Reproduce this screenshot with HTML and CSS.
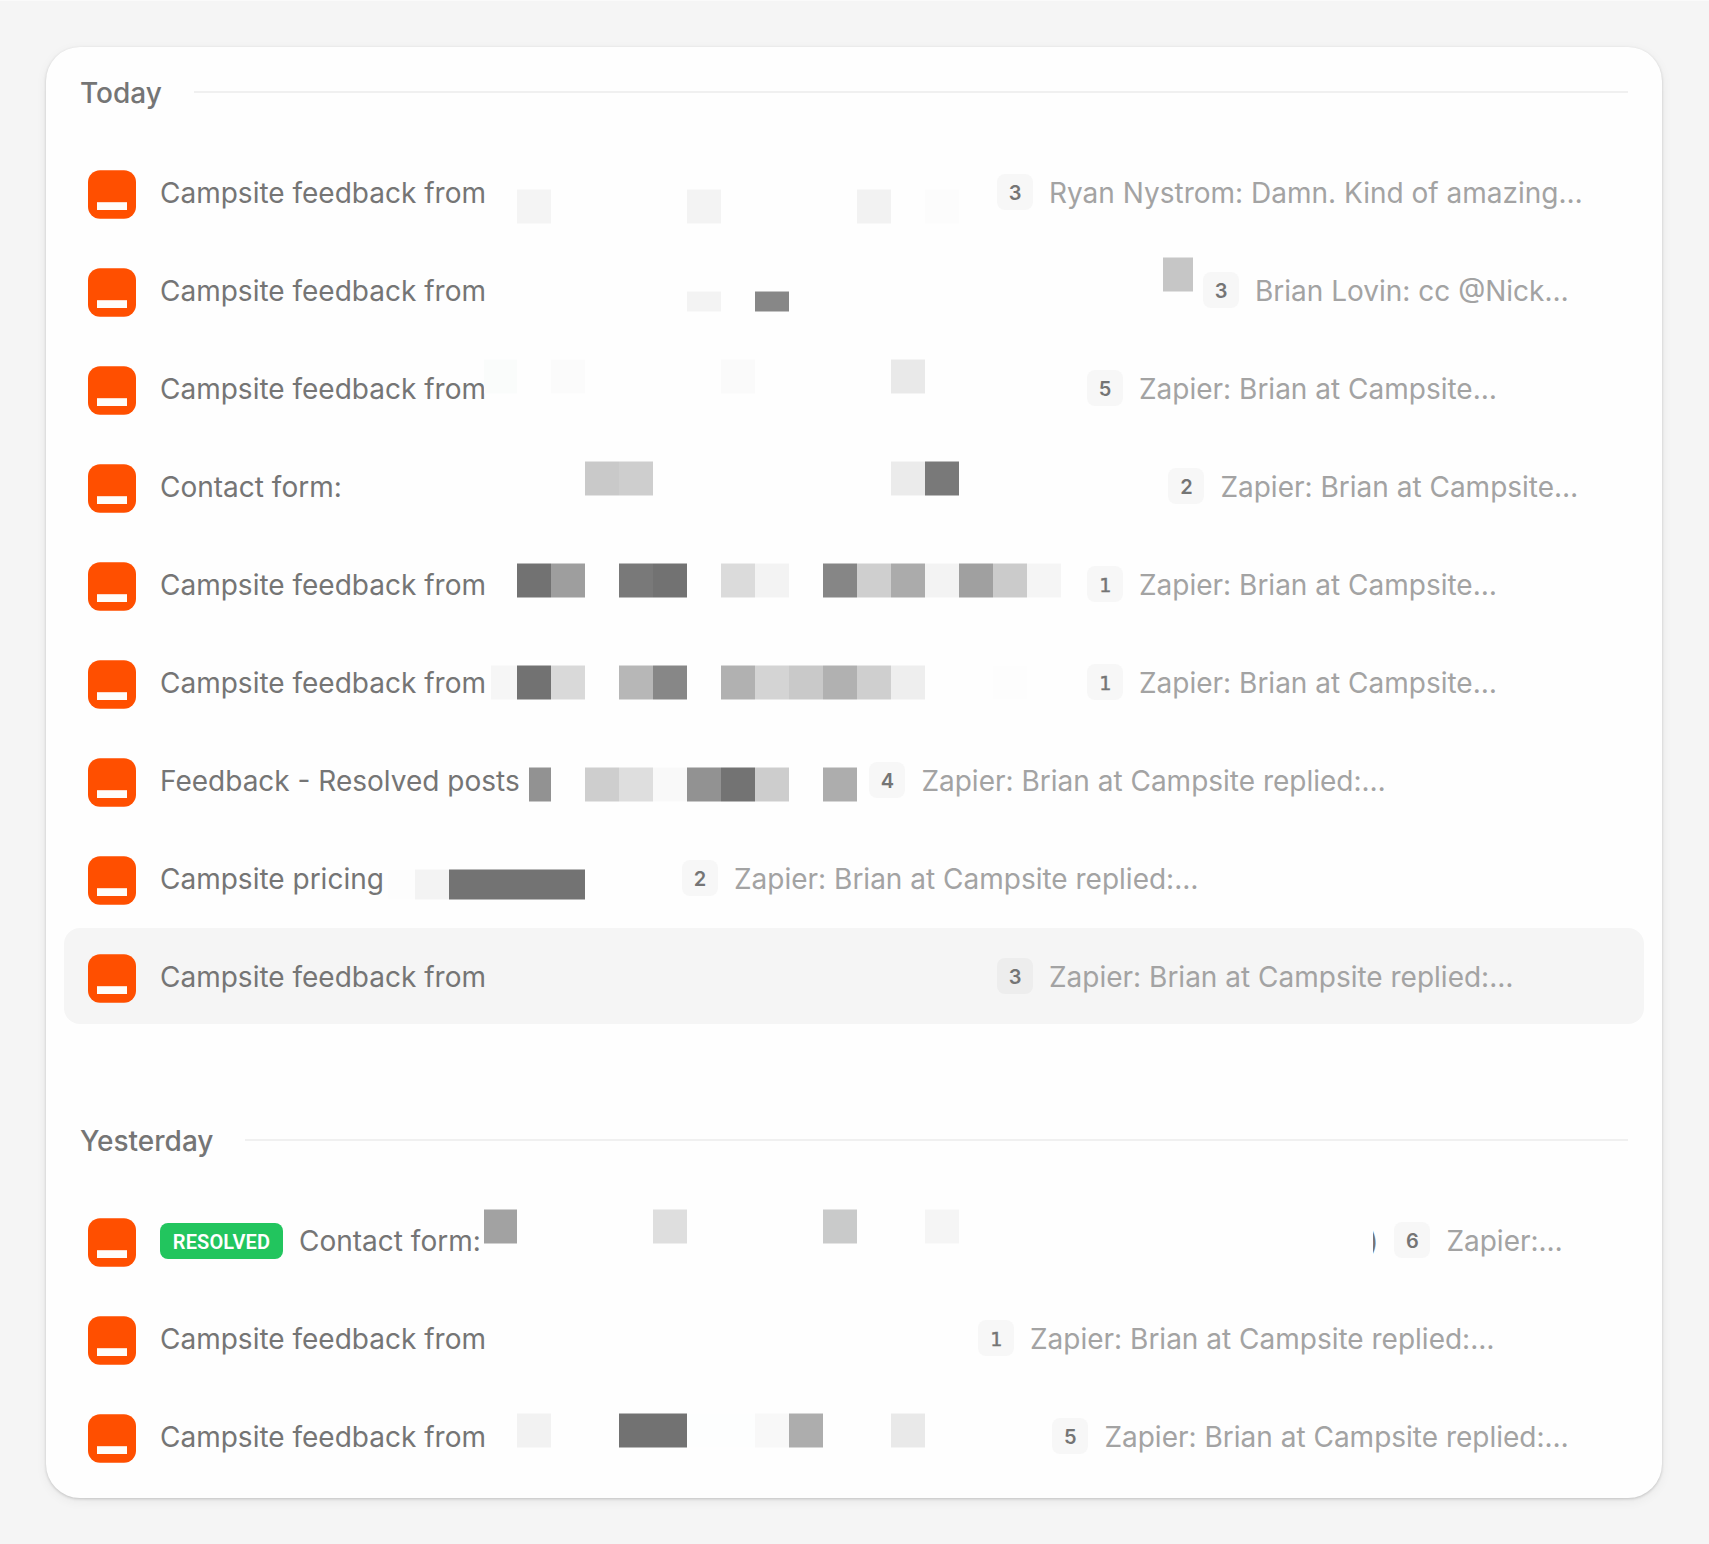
FILE: index.html
```html
<!DOCTYPE html>
<html lang="en">
<head>
<meta charset="utf-8">
<title>Posts</title>
<link rel="stylesheet" href="styles.css">
</head>
<body>
<main class="card">
  <section class="group">
    <h2 class="group-title"><span>Today</span></h2>
    <ul class="list">
      <li class="row">
        <svg class="avatar" viewBox="0 0 48 49"><rect y=".3" width="48" height="48.4" rx="12" fill="#ff4f00"/><rect x="9" y="32.2" width="30" height="7.8" fill="#fffdf9"/></svg>
        <div class="title" style="width:821px">Campsite feedback from</div>
        <span class="count">3</span>
        <span class="preview">Ryan Nystrom: Damn. Kind of amazing…</span>
        <svg class="redact" viewBox="0 0 1580 96"><rect x="453" y="45.5" width="34" height="34" fill="#f4f4f4"/><rect x="623" y="45.5" width="34" height="34" fill="#f3f3f3"/><rect x="793" y="45.5" width="34" height="34" fill="#f2f2f2"/><rect x="861" y="45.5" width="34" height="34" fill="#fcfcfc"/></svg>
      </li>
      <li class="row">
        <svg class="avatar" viewBox="0 0 48 49"><rect y=".3" width="48" height="48.4" rx="12" fill="#ff4f00"/><rect x="9" y="32.2" width="30" height="7.8" fill="#fffdf9"/></svg>
        <div class="title" style="width:1027px">Campsite feedback from</div>
        <span class="count">3</span>
        <span class="preview">Brian Lovin: cc @Nick…</span>
        <svg class="redact" viewBox="0 0 1580 96"><rect x="623" y="49.5" width="34" height="20" fill="#f3f3f3"/><rect x="691" y="49.5" width="34" height="20" fill="#878787"/><rect x="1099" y="15.5" width="30" height="34" fill="#c6c6c6"/></svg>
      </li>
      <li class="row">
        <svg class="avatar" viewBox="0 0 48 49"><rect y=".3" width="48" height="48.4" rx="12" fill="#ff4f00"/><rect x="9" y="32.2" width="30" height="7.8" fill="#fffdf9"/></svg>
        <div class="title" style="width:911px">Campsite feedback from</div>
        <span class="count">5</span>
        <span class="preview">Zapier: Brian at Campsite…</span>
        <svg class="redact" viewBox="0 0 1580 96"><rect x="420" y="19.5" width="33" height="34" fill="#fafcfb"/><rect x="487" y="19.5" width="34" height="34" fill="#fbfbfb"/><rect x="657" y="19.5" width="34" height="34" fill="#fafafa"/><rect x="827" y="19.5" width="34" height="34" fill="#e9e9e9"/></svg>
      </li>
      <li class="row">
        <svg class="avatar" viewBox="0 0 48 49"><rect y=".3" width="48" height="48.4" rx="12" fill="#ff4f00"/><rect x="9" y="32.2" width="30" height="7.8" fill="#fffdf9"/></svg>
        <div class="title" style="width:992.4px">Contact form:</div>
        <span class="count">2</span>
        <span class="preview">Zapier: Brian at Campsite…</span>
        <svg class="redact" viewBox="0 0 1580 96"><rect x="521" y="23.5" width="34" height="34" fill="#c9c9c9"/><rect x="555" y="23.5" width="34" height="34" fill="#cecece"/><rect x="827" y="23.5" width="34" height="34" fill="#ebebeb"/><rect x="861" y="23.5" width="34" height="34" fill="#797979"/></svg>
      </li>
      <li class="row">
        <svg class="avatar" viewBox="0 0 48 49"><rect y=".3" width="48" height="48.4" rx="12" fill="#ff4f00"/><rect x="9" y="32.2" width="30" height="7.8" fill="#fffdf9"/></svg>
        <div class="title" style="width:911px">Campsite feedback from</div>
        <span class="count count-slab">1</span>
        <span class="preview">Zapier: Brian at Campsite…</span>
        <svg class="redact" viewBox="0 0 1580 96"><rect x="453" y="27.5" width="34" height="34" fill="#727272"/><rect x="487" y="27.5" width="34" height="34" fill="#9e9e9e"/><rect x="555" y="27.5" width="34" height="34" fill="#797979"/><rect x="589" y="27.5" width="34" height="34" fill="#727272"/><rect x="657" y="27.5" width="34" height="34" fill="#dbdbdb"/><rect x="691" y="27.5" width="34" height="34" fill="#f3f3f3"/><rect x="759" y="27.5" width="34" height="34" fill="#868686"/><rect x="793" y="27.5" width="34" height="34" fill="#cfcfcf"/><rect x="827" y="27.5" width="34" height="34" fill="#ababab"/><rect x="861" y="27.5" width="34" height="34" fill="#f3f3f3"/><rect x="895" y="27.5" width="34" height="34" fill="#a0a0a0"/><rect x="929" y="27.5" width="34" height="34" fill="#cbcbcb"/><rect x="963" y="27.5" width="34" height="34" fill="#f5f5f5"/></svg>
      </li>
      <li class="row">
        <svg class="avatar" viewBox="0 0 48 49"><rect y=".3" width="48" height="48.4" rx="12" fill="#ff4f00"/><rect x="9" y="32.2" width="30" height="7.8" fill="#fffdf9"/></svg>
        <div class="title" style="width:911px">Campsite feedback from</div>
        <span class="count count-slab">1</span>
        <span class="preview">Zapier: Brian at Campsite…</span>
        <svg class="redact" viewBox="0 0 1580 96"><rect x="427" y="31.5" width="26" height="34" fill="#f6f6f6"/><rect x="453" y="31.5" width="34" height="34" fill="#727272"/><rect x="487" y="31.5" width="34" height="34" fill="#d9d9d9"/><rect x="555" y="31.5" width="34" height="34" fill="#b7b7b7"/><rect x="589" y="31.5" width="34" height="34" fill="#878787"/><rect x="657" y="31.5" width="34" height="34" fill="#b1b1b1"/><rect x="691" y="31.5" width="34" height="34" fill="#d4d4d4"/><rect x="725" y="31.5" width="34" height="34" fill="#c9c9c9"/><rect x="759" y="31.5" width="34" height="34" fill="#b1b1b1"/><rect x="793" y="31.5" width="34" height="34" fill="#cfcfcf"/><rect x="827" y="31.5" width="34" height="34" fill="#eeeeee"/><rect x="929" y="31.5" width="34" height="34" fill="#fdfdfd"/></svg>
      </li>
      <li class="row">
        <svg class="avatar" viewBox="0 0 48 49"><rect y=".3" width="48" height="48.4" rx="12" fill="#ff4f00"/><rect x="9" y="32.2" width="30" height="7.8" fill="#fffdf9"/></svg>
        <div class="title" style="width:693.4px">Feedback - Resolved posts</div>
        <span class="count">4</span>
        <span class="preview">Zapier: Brian at Campsite replied:…</span>
        <svg class="redact" viewBox="0 0 1580 96"><rect x="465" y="35.5" width="22" height="34" fill="#929292"/><rect x="521" y="35.5" width="34" height="34" fill="#cecece"/><rect x="555" y="35.5" width="34" height="34" fill="#dedede"/><rect x="589" y="35.5" width="34" height="34" fill="#f9f9f9"/><rect x="623" y="35.5" width="34" height="34" fill="#929292"/><rect x="657" y="35.5" width="34" height="34" fill="#737373"/><rect x="691" y="35.5" width="34" height="34" fill="#cdcdcd"/><rect x="759" y="35.5" width="34" height="34" fill="#adadad"/></svg>
      </li>
      <li class="row">
        <svg class="avatar" viewBox="0 0 48 49"><rect y=".3" width="48" height="48.4" rx="12" fill="#ff4f00"/><rect x="9" y="32.2" width="30" height="7.8" fill="#fffdf9"/></svg>
        <div class="title" style="width:506px">Campsite pricing</div>
        <span class="count">2</span>
        <span class="preview">Zapier: Brian at Campsite replied:…</span>
        <svg class="redact" viewBox="0 0 1580 96"><rect x="324" y="39.5" width="27" height="30" fill="#fdfdfd"/><rect x="351" y="39.5" width="34" height="30" fill="#f3f3f3"/><rect x="385" y="39.5" width="136" height="30" fill="#737373"/></svg>
      </li>
      <li class="row row-active">
        <svg class="avatar" viewBox="0 0 48 49"><rect y=".3" width="48" height="48.4" rx="12" fill="#ff4f00"/><rect x="9" y="32.2" width="30" height="7.8" fill="#fffdf9"/></svg>
        <div class="title" style="width:821px">Campsite feedback from</div>
        <span class="count">3</span>
        <span class="preview">Zapier: Brian at Campsite replied:…</span>
      </li>
    </ul>
  </section>
  <section class="group">
    <h2 class="group-title"><span>Yesterday</span></h2>
    <ul class="list">
      <li class="row">
        <svg class="avatar" viewBox="0 0 48 49"><rect y=".3" width="48" height="48.4" rx="12" fill="#ff4f00"/><rect x="9" y="32.2" width="30" height="7.8" fill="#fffdf9"/></svg>
        <div class="title" style="width:1218.4px"><span class="tag">RESOLVED</span><span>Contact form:</span><span class="tail">)</span></div>
        <span class="count">6</span>
        <span class="preview">Zapier:…</span>
        <svg class="redact" viewBox="0 0 1580 96"><rect x="420" y="17.5" width="33" height="34" fill="#a2a2a2"/><rect x="589" y="17.5" width="34" height="34" fill="#dedede"/><rect x="759" y="17.5" width="34" height="34" fill="#c9caca"/><rect x="861" y="17.5" width="34" height="34" fill="#f5f5f5"/><rect x="1275" y="17.5" width="34" height="68" fill="#fefefe"/></svg>
      </li>
      <li class="row">
        <svg class="avatar" viewBox="0 0 48 49"><rect y=".3" width="48" height="48.4" rx="12" fill="#ff4f00"/><rect x="9" y="32.2" width="30" height="7.8" fill="#fffdf9"/></svg>
        <div class="title" style="width:802px">Campsite feedback from</div>
        <span class="count count-slab">1</span>
        <span class="preview">Zapier: Brian at Campsite replied:…</span>
      </li>
      <li class="row">
        <svg class="avatar" viewBox="0 0 48 49"><rect y=".3" width="48" height="48.4" rx="12" fill="#ff4f00"/><rect x="9" y="32.2" width="30" height="7.8" fill="#fffdf9"/></svg>
        <div class="title" style="width:876.4px">Campsite feedback from</div>
        <span class="count">5</span>
        <span class="preview">Zapier: Brian at Campsite replied:…</span>
        <svg class="redact" viewBox="0 0 1580 96"><rect x="453" y="25.5" width="34" height="34" fill="#f2f2f2"/><rect x="555" y="25.5" width="68" height="34" fill="#727272"/><rect x="623" y="25.5" width="68" height="34" fill="#fdfefe"/><rect x="691" y="25.5" width="34" height="34" fill="#f8f8f8"/><rect x="725" y="25.5" width="34" height="34" fill="#adadad"/><rect x="827" y="25.5" width="34" height="34" fill="#e9e9e9"/></svg>
      </li>
    </ul>
  </section>
</main>
</body>
</html>
```
FILE: styles.css
```css
* { box-sizing: border-box; }

body {
  margin: 0;
  height: 1544px;
  padding: 46px 47px 46px 46px;
  border-top: 1px solid #fafafa;
  background: #f5f5f5;
  font-family: Inter, "Liberation Sans", sans-serif;
  font-size: 28px;
  line-height: 40px;
  color: #757575;
}

.card {
  height: 1451px;
  padding: 15px 18px 14px;
  border-radius: 34px;
  background: #fefefe;
  box-shadow: 0 1px 3px rgba(0, 0, 0, 0.18), 0 3px 12px rgba(0, 0, 0, 0.06);
}

.group + .group { margin-top: 86px; }

.group-title {
  display: flex;
  align-items: center;
  gap: 32px;
  height: 60px;
  margin: 0 16px 22px;
  font-size: 28px;
  font-weight: 500;
}

.group-title span { padding-top: 2px; }

.group-title::after {
  content: "";
  flex: 1;
  height: 2px;
  background: #f0f0f0;
}

.list {
  display: flex;
  flex-direction: column;
  gap: 2px;
  margin: 0;
  padding: 0;
  list-style: none;
}

.row {
  position: relative;
  display: flex;
  align-items: center;
  height: 96px;
  padding: 0 24px;
  border-radius: 16px;
  white-space: nowrap;
}

.row-active { background: #f5f5f5; }

.avatar {
  flex: none;
  width: 48px;
  height: 49px;
  margin: 5px 24px 0 0;
}

.title {
  display: flex;
  flex: none;
  align-items: center;
  gap: 16px;
  margin-right: 16px;
  padding-top: 2px;
}

.tag {
  width: 123px;
  height: 36px;
  margin-bottom: 1px;
  border-radius: 8px;
  background: #22c55e;
  color: #fff;
  font: 600 20px/38px Roboto, sans-serif;
  letter-spacing: 0.15px;
  text-align: center;
}

.tail {
  display: flex;
  justify-content: flex-end;
  margin-left: auto;
}

.count {
  flex: none;
  width: 36px;
  height: 36px;
  margin-right: 16px;
  border-radius: 8px;
  background: #f7f7f7;
  font: 600 20px/38px Inter, sans-serif;
  text-align: center;
}

/* The slab-footed numeral one comes from the monospace face. */
.count-slab {
  font: 400 20px/38px "DejaVu Sans Mono", monospace;
  -webkit-text-stroke: 0.4px currentColor;
}

.row-active .count { background: #ededed; }

.preview {
  padding-top: 2px;
  color: #a3a3a3;
}

.redact {
  position: absolute;
  inset: 0;
  width: 1580px;
  height: 96px;
  pointer-events: none;
}
```
